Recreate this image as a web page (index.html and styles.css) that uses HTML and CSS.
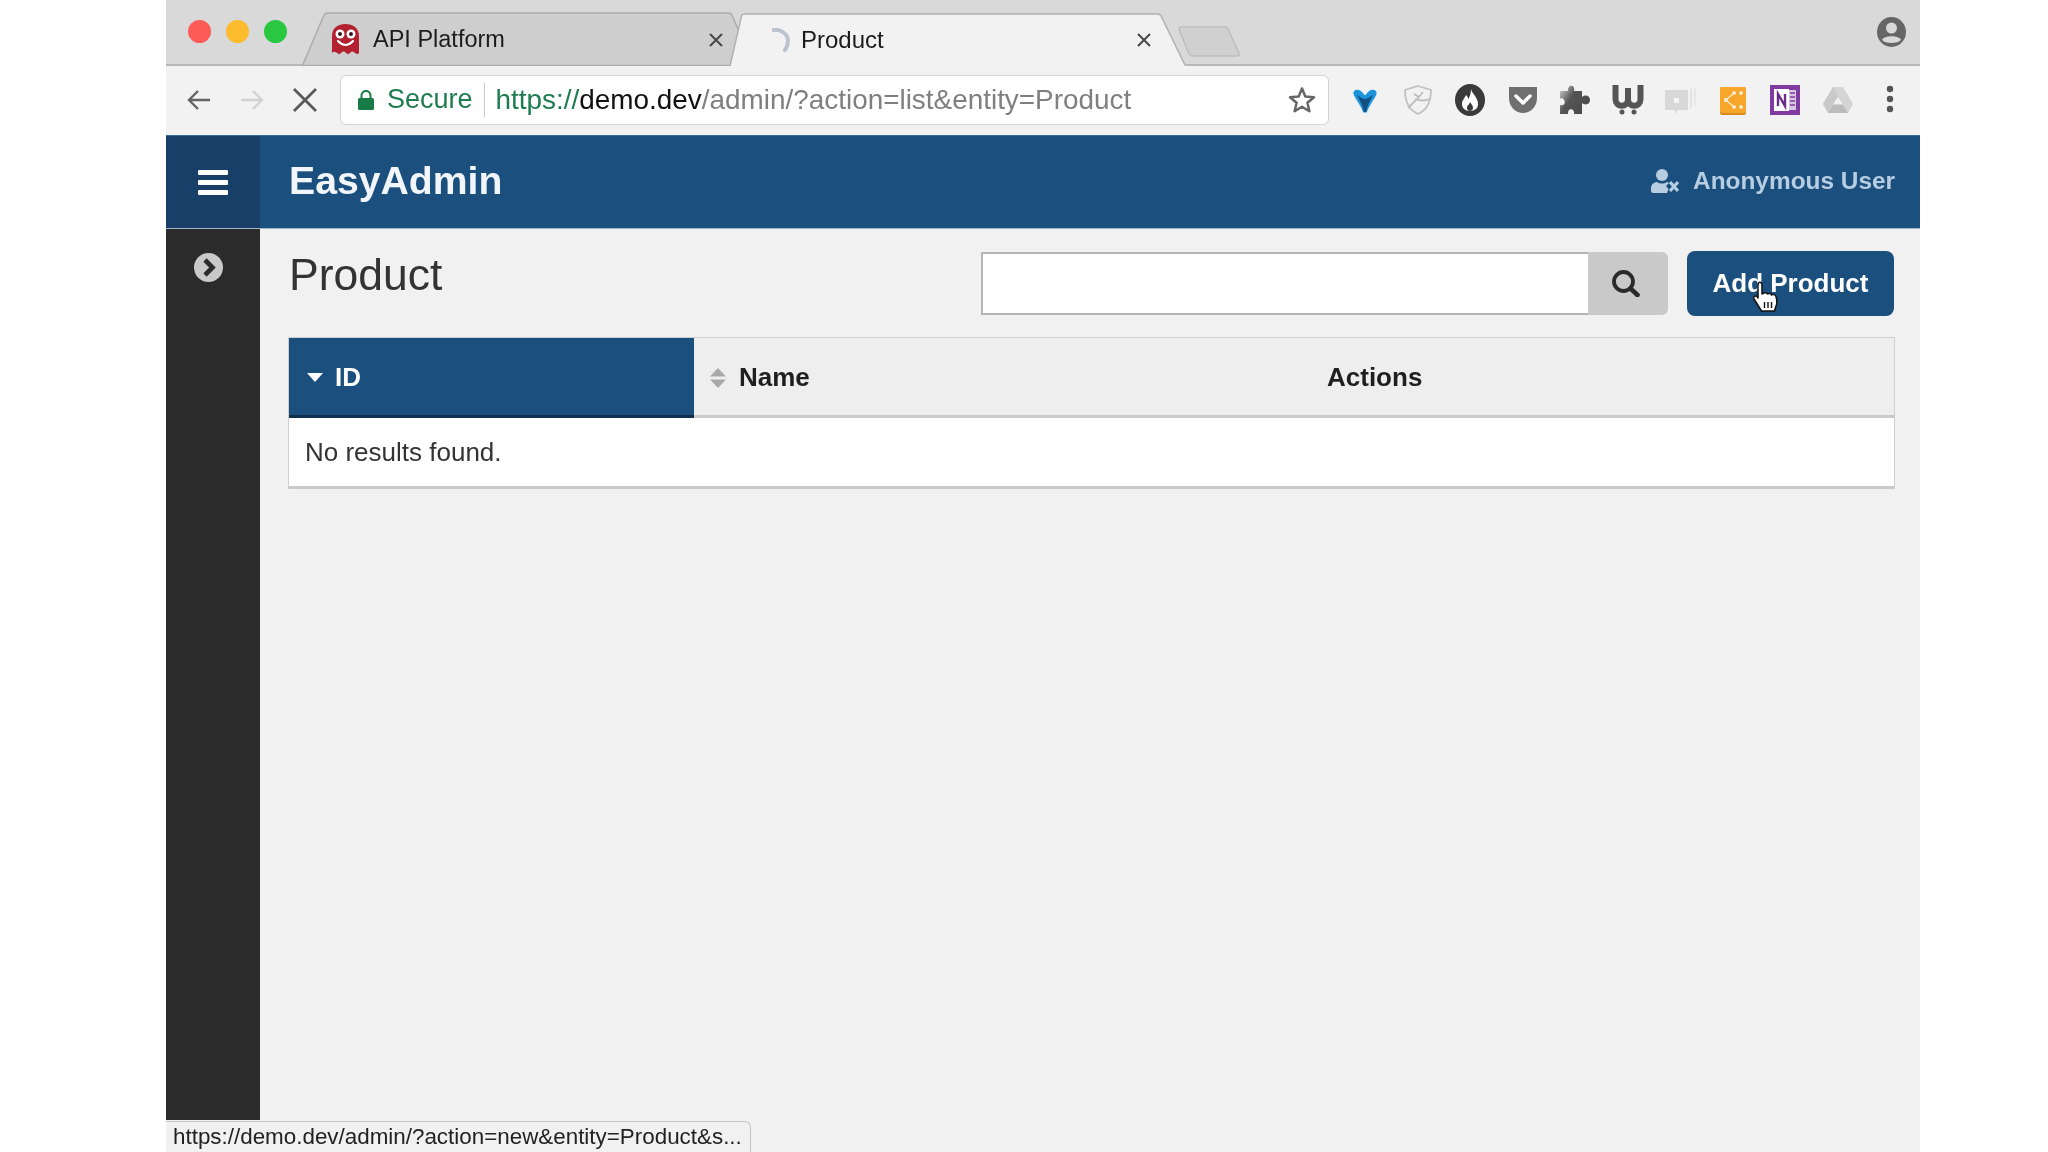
FILE: index.html
```html
<!DOCTYPE html>
<html lang="en">
<head>
<meta charset="utf-8">
<title>Product - EasyAdmin</title>
<link rel="stylesheet" href="styles.css">
</head>
<body>
<div class="window">
  <div class="tabstrip">
    <div class="lights">
      <span class="light red"></span>
      <span class="light yellow"></span>
      <span class="light green"></span>
    </div>
    <div class="tab tab-inactive">
      <svg class="tab-shape" width="442" height="54" viewBox="0 0 442 54"><path d="M0.5 53.5 L22 3 Q23 1 26 1 L426 1 Q429 1 430 3 L441 29 L428 53.5 Z" fill="#cecece" stroke="#acacac" stroke-width="1.5"/></svg>
      <svg class="favicon" width="29" height="31" viewBox="0 0 29 31"><path d="M1 12 C1 4 7 0 14.500 0 C22 0 28 4 28 12 L28 29 Q26 31 23.500 28.500 Q21 26.500 19 29 Q16.500 31 14.500 28.500 Q12.500 26.500 10 29 Q8 31 5.500 28.500 Q3 27 1 29 Z" fill="#b3202f"/><circle cx="9" cy="10" r="4.500" fill="#fff"/><circle cx="20" cy="10" r="4.500" fill="#fff"/><circle cx="9" cy="10" r="2" fill="#3a1218"/><circle cx="20" cy="10" r="2" fill="#3a1218"/><path d="M7 17 Q14.500 25 22 17" fill="none" stroke="#fff" stroke-width="2.200" stroke-linecap="round"/></svg>
      <span class="tab-title">API Platform</span>
      <svg class="tab-close" width="14" height="14" viewBox="0 0 14 14"><path d="M1 1 L13 13 M13 1 L1 13" stroke="#484848" stroke-width="2"/></svg>
    </div>
    <div class="tab tab-active">
      <svg class="tab-shape" width="456" height="53" viewBox="0 0 456 53"><path d="M0 53 L11 3 Q12 1 15 1 L428 1 Q430 1 431 3 L455 53 Z" fill="#f2f2f3"/><path d="M0 53 L11.500 3 Q12 1 15 1 L428 1 Q430 1 431 3 L455 52" fill="none" stroke="#b0b0b0" stroke-width="1.500"/></svg>
      <svg class="spinner" width="18" height="24" viewBox="0 0 18 24"><path d="M1 2 C9 1 16 6 16 13 C16 16 15 19 13 22" fill="none" stroke="#bcc2ce" stroke-width="4" stroke-linecap="round"/></svg>
      <span class="tab-title">Product</span>
      <svg class="tab-close" width="14" height="14" viewBox="0 0 14 14"><path d="M1 1 L13 13 M13 1 L1 13" stroke="#484848" stroke-width="2"/></svg>
    </div>
    <svg class="newtab" width="62" height="31" viewBox="0 0 62 31"><path d="M1 3 Q0.500 1 3 1 L47 1 Q49 1 50 3 L61 27 Q61.500 30 59 30 L15 30 Q12 30 11 28 Z" fill="#d0d0d0" stroke="#bdbdbd" stroke-width="1.500"/></svg>
    <svg class="profile" width="29" height="30" viewBox="0 0 29 30"><ellipse cx="14.500" cy="15" rx="14.500" ry="15" fill="#666"/><circle cx="14.500" cy="11" r="5.500" fill="#d9d9d9"/><path d="M5 23 C7 18 22 18 24 23 C21 27 8 27 5 23 Z" fill="#d9d9d9"/></svg>
  </div>

  <div class="toolbar">
    <svg class="nav-icon" width="26" height="26" viewBox="0 0 26 26"><path d="M24 13 H3 M12 4 L3 13 L12 22" fill="none" stroke="#646464" stroke-width="2.400"/></svg>
    <svg class="nav-icon" width="26" height="26" viewBox="0 0 26 26"><path d="M2 13 H23 M14 4 L23 13 L14 22" fill="none" stroke="#d2d2d2" stroke-width="2.400"/></svg>
    <svg class="nav-icon" width="26" height="26" viewBox="0 0 26 26"><path d="M2 2 L24 24 M24 2 L2 24" fill="none" stroke="#5a5a5a" stroke-width="2.800"/></svg>
    <div class="omnibox">
      <svg class="lock" width="16" height="20" viewBox="0 0 16 20"><path d="M3.500 9 V5.500 C3.500 -0.500 12.500 -0.500 12.500 5.500 V9" fill="none" stroke="#177a47" stroke-width="2"/><rect x="0" y="8" width="16" height="12" rx="1.500" fill="#177a47"/></svg>
      <span class="secure">Secure</span>
      <span class="omni-sep"></span>
      <span class="url"><span class="url-scheme">https://</span><span class="url-host">demo.dev</span>/admin/?action=list&amp;entity=Product</span>
      <svg class="star" width="28" height="27" viewBox="0 0 28 27"><path d="M14 2.500 L17.300 10.500 L26 11.200 L19.400 16.800 L21.400 25.200 L14 20.700 L6.600 25.200 L8.600 16.800 L2 11.200 L10.700 10.500 Z" fill="none" stroke="#666" stroke-width="2.500" stroke-linejoin="round"/></svg>
    </div>
    <div class="extensions">
      <svg class="ext" width="32" height="32" viewBox="0 0 32 32"><path d="M4 8 C7 3 12 5 16 11 C20 5 25 3 28 8 C29 12 22 18 18 29 H14 C10 18 3 12 4 8 Z" fill="#1d93dc" stroke="#e8f3fa"/><path d="M8 11 C11 13 14 15 16 15 C18 15 21 13 24 11 C21 17 18 22 17 28 H15 C14 22 11 17 8 11 Z" fill="#12507f"/></svg>
      <svg class="ext" width="32" height="32" viewBox="0 0 32 32"><path d="M16 2 L29 6 C29 18 25 26 16 30 C7 26 3 18 3 6 Z" fill="none" stroke="#c2c2c2" stroke-width="1.800"/><path d="M6 24 L17 13 L21 8 M13 15 C18 17 23 17 28 15 M17 13 L12 10" fill="none" stroke="#bdbdbd" stroke-width="1.800"/></svg>
      <svg class="ext" width="32" height="32" viewBox="0 0 32 32"><ellipse cx="16" cy="16" rx="15" ry="16" fill="#3a3a3a"/><path d="M17 5 C18 10 24 13 24 20 C24 25 20 27 16 27 C11 27 8 24 8 20 C8 16 11 14 12 11 C14 13 14 14 14.500 15 C16 12 17 9 17 5 Z" fill="#fff"/><path d="M16 18 C17 20 19 21 19 24 C19 26 17 27 16 27 C14.500 27 13 26 13 24 C13 21 15.500 21 16 18 Z" fill="#3a3a3a"/></svg>
      <svg class="ext" width="32" height="32" viewBox="0 0 32 32"><path d="M2 3 H30 V14 C30 23 23 29 16 29 C9 29 2 23 2 14 Z" fill="#6f6f6f"/><path d="M9 12 L16 19 L23 12" fill="none" stroke="#fff" stroke-width="3.500" stroke-linecap="round" stroke-linejoin="round"/></svg>
      <svg class="ext" width="32" height="32" viewBox="0 0 32 32"><defs><linearGradient id="puzzle" x1="0" y1="0" x2="1" y2="0.600"><stop offset="0" stop-color="#d4d4d4"/><stop offset="0.450" stop-color="#555"/><stop offset="1" stop-color="#4a4a4a"/></linearGradient></defs><path d="M1 7 H9 C8 2 14 0 15 4 C15.500 6 15 7 15 7 H23 V13 C27 10 31 12 31 16 C31 20 27 22 23 19 V30 H15 C16 26 12 24 10 26 C9 27 9 29 9 30 H1 V21 C5 22 7 19 5 16 C4 14 2 14 1 15 Z" fill="url(#puzzle)"/></svg>
      <svg class="ext" width="32" height="32" viewBox="0 0 32 32"><path d="M3.500 1 V15 C3.500 24 16 24 16 15 V4 V15 C16 24 28.500 24 28.500 15 V1" fill="none" stroke="#555" stroke-width="6"/><circle cx="10" cy="28" r="2.500" fill="#555"/><circle cx="22" cy="28" r="2.500" fill="#555"/></svg>
      <svg class="ext" width="32" height="32" viewBox="0 0 32 32"><path d="M1 6 H24 V26 H14 L11 30 V26 H1 Z" fill="#d8d8d8"/><path d="M26 5 H28 V24 H26 Z M30 4 H31.500 V22 H30 Z" fill="#e2e2e2"/><rect x="10" y="14" width="5" height="5" fill="#f4f4f4"/></svg>
      <svg class="ext" width="32" height="32" viewBox="0 0 32 32"><rect x="3" y="3" width="26" height="28" rx="2" fill="#d98a1c"/><rect x="3" y="3" width="26" height="26" rx="2" fill="#f6a729"/><g fill="#fbe9cb"><circle cx="9" cy="16" r="2.200"/><circle cx="17" cy="9" r="2"/><circle cx="24" cy="9" r="2"/><circle cx="17" cy="23" r="2"/><circle cx="24" cy="23" r="2"/></g><path d="M9 16 L17 9 M9 16 L17 23" stroke="#fbe9cb" stroke-width="1.300"/></svg>
      <svg class="ext" width="32" height="32" viewBox="0 0 32 32"><rect x="1" y="1" width="30" height="30" fill="#7f3b9f"/><rect x="5" y="5" width="15" height="22" fill="#fff"/><rect x="20" y="6" width="7" height="20" fill="#d9c5e4"/><path d="M9 22 V10 L16 22 V10" fill="none" stroke="#6a2d8b" stroke-width="2.400"/><path d="M21 9 H26 M21 13 H26 M21 17 H26 M21 21 H26" stroke="#7f3b9f" stroke-width="1.500"/></svg>
      <svg class="ext" width="32" height="32" viewBox="0 0 32 32"><path d="M11 3 H21 L31 20 L26 29 H6 L1 20 Z" fill="#d4d4d4"/><path d="M11 3 L1 20 L6 29 L16 12 Z" fill="#c9c9c9"/><path d="M11 21 H21 L26 29 H6 Z" fill="#bcbcbc"/><path d="M16 13 L20.500 20 H11.500 Z" fill="#f2f2f3"/></svg>
      <svg class="ext" width="32" height="32" viewBox="0 0 32 32"><circle cx="16" cy="5" r="3.200" fill="#555"/><circle cx="16" cy="15" r="3.200" fill="#555"/><circle cx="16" cy="25" r="3.200" fill="#555"/></svg>
    </div>
  </div>

  <header class="topbar">
    <button class="burger" type="button" aria-label="Toggle navigation"><span></span><span></span><span></span></button>
    <div class="brand">EasyAdmin</div>
    <div class="user">
      <svg width="28" height="24" viewBox="0 0 28 24"><circle cx="11" cy="6" r="6" fill="#b6cde2"/><path d="M0 22 V19 C0 15 4 13 6 13 C9 15 13 15 16 13 L18 14 L15 17 L17.500 20 L16 24 H2 C1 24 0 23 0 22 Z" fill="#b6cde2"/><path d="M19 13 L27 22 M27 13 L19 22" stroke="#b6cde2" stroke-width="3.200"/></svg>
      <span>Anonymous User</span>
    </div>
  </header>

  <div class="body">
    <aside class="sidebar">
      <svg width="29" height="29" viewBox="0 0 29 29"><circle cx="14.500" cy="14.500" r="14.500" fill="#c9c9c9"/><path d="M11 7 L18.500 14.500 L11 22" fill="none" stroke="#2b2b2b" stroke-width="4.600"/></svg>
    </aside>
    <main class="content">
      <div class="head-row">
        <h1 class="page-title">Product</h1>
        <div class="actions">
          <form class="search">
            <input class="search-input" type="text" aria-label="Search">
            <button class="search-btn" type="button" aria-label="Search"><svg width="28" height="27" viewBox="0 0 28 27"><circle cx="11.500" cy="11.500" r="9.500" fill="none" stroke="#2b2b2b" stroke-width="3.800"/><path d="M18.500 18.500 L25.500 25" stroke="#2b2b2b" stroke-width="4.600" stroke-linecap="round"/></svg></button>
          </form>
          <a class="add-btn">Add Product
            <svg class="cursor" width="27" height="31" viewBox="0 0 27 31"><path d="M7 1.500 C9 1 10 2 10 4 V13 L12 12 C14 11.500 15 12 15.500 13 C17 12 19 12.500 19.500 14 C21 13 23.500 13.500 24 15.500 C25 19 25 23 24 25 L22.500 30 H9.500 L7 26 L2 18 C1 16 3 14 5 15.500 L6 17 V4 C6 2.500 6 2 7 1.500 Z" fill="#fff" stroke="#111" stroke-width="1.500" stroke-linejoin="round"/><path d="M12.500 21 V27 M16 21 V27 M19.500 21 V27" stroke="#111" stroke-width="1.400"/></svg>
          </a>
        </div>
      </div>
      <table class="grid">
        <colgroup><col class="col-id"><col class="col-name"><col class="col-actions"></colgroup>
        <thead>
          <tr>
            <th class="sorted"><span class="th-in th-in-sorted"><svg width="16" height="9" viewBox="0 0 16 9"><path d="M0 0 H16 L8 9 Z" fill="#fff"/></svg>ID</span></th>
            <th><span class="th-in"><svg width="16" height="20" viewBox="0 0 16 20"><path d="M8 0 L16 8.500 H0 Z M0 11.500 H16 L8 20 Z" fill="#a9a9a9"/></svg>Name</span></th>
            <th>Actions</th>
          </tr>
        </thead>
        <tbody>
          <tr><td colspan="3">No results found.</td></tr>
        </tbody>
      </table>
    </main>
  </div>
  <div class="status">https://demo.dev/admin/?action=new&amp;entity=Product&amp;s...</div>
</div>
</body>
</html>
```
FILE: styles.css
```css
* { box-sizing: border-box; }
html, body { margin: 0; padding: 0; height: 100%; background: #fff; }
body { font-family: "Liberation Sans", Arial, sans-serif; overflow: hidden; }

.window {
  position: relative;
  width: 1754px;
  height: 1152px;
  margin-left: 166px;
  display: flex;
  flex-direction: column;
  background: #f1f1f1;
  overflow: hidden;
  filter: blur(0.5px);
}

/* tab strip */
.tabstrip {
  height: 66px;
  flex: none;
  display: flex;
  align-items: flex-end;
  background: #d9d9d9;
  border-bottom: 2px solid #b8b8b8;
  position: relative;
}
.lights { display: flex; gap: 15px; margin-left: 22px; margin-right: 1px; align-self: flex-start; margin-top: 20px; width: 113px; }
.light { width: 23px; height: 23px; border-radius: 50%; flex: none; }
.red { background: #fc5b57; }
.yellow { background: #fdbb2e; }
.green { background: #2ac741; }

.tab {
  position: relative;
  height: 54px;
  margin-bottom: -2px;
  display: flex;
  align-items: center;
  font-size: 23.500px;
  color: #1c1c1c;
}
.tab-shape { position: absolute; left: 0; bottom: 0; }
.tab > :not(.tab-shape) { position: relative; }
.tab-inactive { width: 428px; padding: 1px 7px 0 29px; }
.tab-active { width: 455px; padding: 1px 34px 0 42px; font-size: 24px; }
.favicon { margin-right: 13px; flex: none; }
.spinner { margin-right: 11px; flex: none; }
.tab-close { margin-left: auto; flex: none; }
.newtab { margin: 0 0 7px -7px; flex: none; }
.profile { margin: 0 14px 17px auto; flex: none; }

/* toolbar */
.toolbar {
  height: 69px;
  flex: none;
  display: flex;
  align-items: center;
  padding: 0 0 2px 20px;
  background: #f2f2f3;
}
.nav-icon { flex: none; margin-right: 27px; }
.nav-icon:nth-child(3) { margin-right: 22px; }
.omnibox {
  width: 989px;
  height: 50px;
  flex: none;
  display: flex;
  align-items: center;
  padding: 0 12px 0 17px;
  background: #fff;
  border: 1.500px solid #d2d2d2;
  border-radius: 6px;
  font-size: 27.900px;
}
.lock { flex: none; margin-right: 13px; }
.secure { color: #1e7d4f; font-size: 27px; }
.omni-sep { width: 1px; height: 34px; background: #c8c8c8; margin: 0 11px; flex: none; }
.url { color: #7f7f7f; white-space: nowrap; }
.url-scheme { color: #1e7d4f; }
.url-host { color: #111; }
.star { margin-left: auto; flex: none; }
.extensions { display: flex; gap: 20.500px; margin-left: 20px; }
.ext { flex: none; }

/* blue bar */
.topbar {
  height: 94px;
  flex: none;
  display: flex;
  align-items: center;
  background: #1b4f7e;
  border-top: 1px solid #3b6a94;
  border-bottom: 1px solid #9fb6cb;
}
.burger {
  width: 94px;
  height: 100%;
  flex: none;
  display: flex;
  flex-direction: column;
  align-items: center;
  justify-content: center;
  gap: 5px;
  padding: 0;
  border: 0;
  background: #183f68;
}
.burger span { width: 30px; height: 5px; background: #fff; border-radius: 1px; }
.brand { margin: -2px 0 0 29px; font-size: 39.200px; font-weight: 700; color: #f2f6fa; }
.user {
  margin: -2px 25px 0 auto;
  display: flex;
  align-items: center;
  gap: 14px;
  font-size: 24.400px;
  font-weight: 700;
  color: #b6cde2;
}

/* body */
.body { flex: 1; display: flex; min-height: 0; }
.sidebar {
  width: 94px;
  flex: none;
  background: #2b2b2b;
  padding: 24px 0 0 28px;
  margin-bottom: 32px;
}
.content { flex: 1; padding: 22px 25px 0 28px; min-width: 0; }
.head-row { display: flex; justify-content: space-between; align-items: flex-start; height: 64px; }
.page-title { margin: 0 0 0 1px; font-size: 44.500px; line-height: 48px; font-weight: 400; color: #333; }
.actions { display: flex; gap: 19px; margin-right: 1px; }
.search { display: flex; margin: 0; }
.search-input {
  width: 607px;
  height: 63px;
  margin-top: 1px;
  padding: 0 12px;
  background: #fff;
  border: 2px solid #b5b5b5;
  border-right: 0;
  outline: 0;
}
.search-btn {
  width: 80px;
  height: 63px;
  margin-top: 1px;
  display: flex;
  align-items: center;
  justify-content: center;
  padding: 0 4px 1px 0;
  border: 0;
  border-radius: 0 6px 6px 0;
  background: #c9c9c9;
}
.add-btn {
  position: relative;
  width: 207px;
  height: 65px;
  display: flex;
  align-items: center;
  justify-content: center;
  border-radius: 8px;
  background: #1b4f7e;
  color: #fff;
  font-size: 26px;
  font-weight: 700;
}
.cursor { position: absolute; left: 65px; top: 30px; }

/* table */
.grid {
  width: 1607px;
  margin-top: 22px;
  table-layout: fixed;
  border-collapse: separate;
  border-spacing: 0;
  font-size: 26px;
  color: #333;
  border: 1px solid #cfcfcf;
  border-bottom: 3px solid #c9c9c9;
}
.col-id { width: 405px; }
.col-name { width: 617px; }
.grid th {
  height: 80px;
  padding: 2px 0 0 16px;
  text-align: left;
  font-weight: 700;
  color: #1f1f1f;
  background: #eee;
  border-bottom: 3px solid #cacaca;
}
.grid th.sorted { background: #1b4f7e; color: #fff; border-bottom-color: #0e2f50; padding-left: 18px; }
.th-in { display: flex; align-items: center; gap: 13px; }
.th-in-sorted { gap: 12px; }
.grid td { height: 68px; padding: 0 0 0 16px; background: #fff; }

/* link preview */
.status {
  position: absolute;
  left: 0;
  bottom: 0;
  height: 31px;
  padding: 0 8px 0 7px;
  display: flex;
  align-items: center;
  font-size: 22.400px;
  color: #222;
  white-space: nowrap;
  background: #f1f1f1;
  border: 1.500px solid #c4c4c4;
  border-bottom: 0;
  border-left: 0;
  border-radius: 0 6px 0 0;
}
```
